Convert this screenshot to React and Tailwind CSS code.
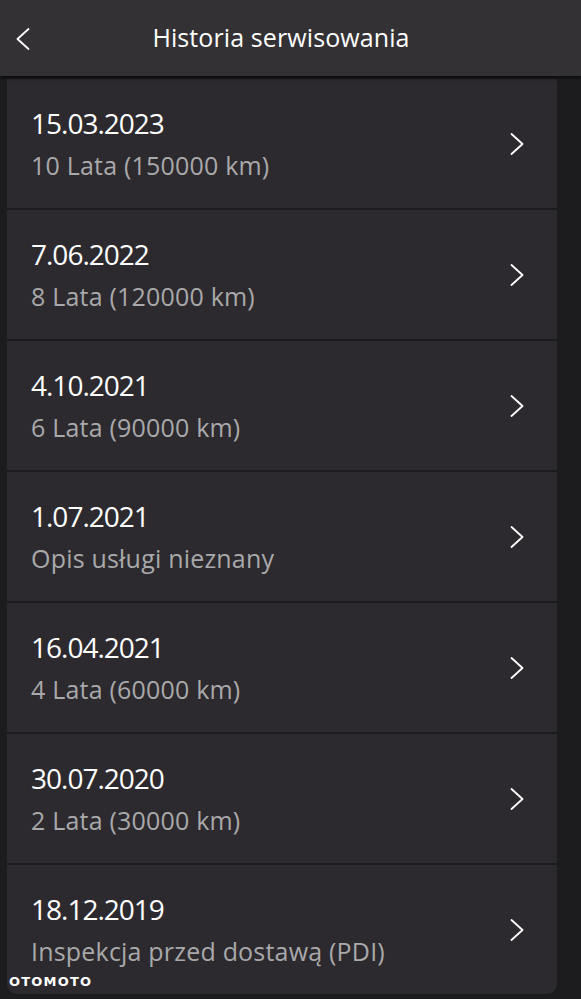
const entries = [
  { date: '15.03.2023', desc: '10 Lata (150000 km)' },
  { date: '7.06.2022', desc: '8 Lata (120000 km)' },
  { date: '4.10.2021', desc: '6 Lata (90000 km)' },
  { date: '1.07.2021', desc: 'Opis usługi nieznany' },
  { date: '16.04.2021', desc: '4 Lata (60000 km)' },
  { date: '30.07.2020', desc: '2 Lata (30000 km)' },
  { date: '18.12.2019', desc: 'Inspekcja przed dostawą (PDI)' },
];

function Chevron({ left = false }) {
  return (
    <svg width="14" height="22" viewBox="0 0 14 22" fill="none" className="text-white shrink-0">
      <polyline
        points={left ? '12.5,1 1.5,11 12.5,21' : '1.5,1 12.5,11 1.5,21'}
        stroke="currentColor"
        strokeWidth="1.8"
        strokeLinecap="round"
        strokeLinejoin="round"
      />
    </svg>
  );
}

export default function App() {
  return (
    <div className="relative w-[581px] h-[999px] overflow-hidden bg-[#1c1b1e] font-['Open_Sans',sans-serif]">
      {/* Header */}
      <header className="relative z-10 h-[76px] bg-[#333134] flex items-center shadow-[0_2px_3px_rgba(0,0,0,0.6)]">
        <button className="w-[50px] h-full flex items-center pl-[16px] pt-[2px]">
          <Chevron left />
        </button>
        <h1 className="flex-1 text-center pr-[69px] text-white text-[25px] tracking-[0.1px]">
          Historia serwisowania
        </h1>
      </header>

      {/* List */}
      <div className="flex flex-col gap-[2px] pt-[3px] pl-[7px] w-[557px]">
        {entries.map((e, i) => (
          <div
            key={e.date}
            className={`h-[129px] bg-[#2c2a2e] flex items-center pl-[24px] pr-[33px] ${
              i === entries.length - 1 ? 'rounded-b-[10px]' : ''
            }`}
          >
            <div className="flex-1 flex flex-col">
              <span className="text-white text-[28px] leading-[40px] tracking-[-1px]">{e.date}</span>
              <span className="text-[#a9a8ab] text-[25px] leading-[40px] mt-[2px] tracking-[0.2px]">{e.desc}</span>
            </div>
            <Chevron />
          </div>
        ))}
      </div>

      {/* Watermark */}
      <div className="absolute left-[9px] bottom-[11px] text-white font-['DejaVu_Sans',sans-serif] font-bold text-[13px] leading-none tracking-[1.2px]">
        OTOMOTO
      </div>
    </div>
  );
}
